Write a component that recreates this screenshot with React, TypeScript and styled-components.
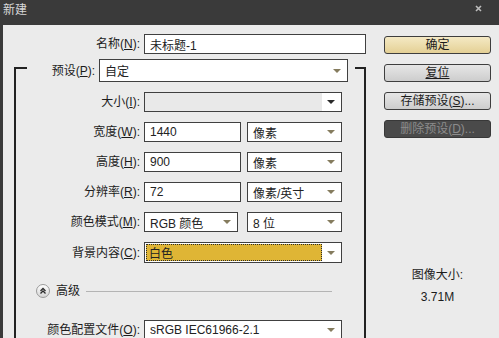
import React from "react";
import styled, { createGlobalStyle, css } from "styled-components";

const GlobalStyle = createGlobalStyle`
  html, body {
    margin: 0;
    padding: 0;
    background: #ebebeb;
  }
  body {
    font-family: "Liberation Sans", "Noto Sans CJK SC", sans-serif;
    font-size: 12px;
    color: #1c1c1c;
  }
`;

const Dialog = styled.div`
  width: 499px;
  height: 338px;
  overflow: hidden;
  display: flex;
  flex-direction: column;
  background: #ebebeb;
`;

const TitleBar = styled.div`
  flex: none;
  height: 25px;
  box-sizing: border-box;
  padding: 3px 17px 0 3px;
  background: #3a3a3a;
  color: #d8d8d8;
  display: flex;
  justify-content: space-between;
  align-items: flex-start;
  line-height: 14px;
`;

const CloseIcon = styled.svg`
  margin-top: 2px;
`;

const Body = styled.div`
  flex: 1;
  min-height: 0;
  display: flex;
  border-left: 3px solid #3a3a3a;
`;

const FormCol = styled.div`
  width: 367px;
  flex: none;
  box-sizing: border-box;
  padding-top: 9px;
  display: flex;
  flex-direction: column;
`;

const Row = styled.div<{ $h?: number; $mt?: number }>`
  display: flex;
  align-items: center;
  height: ${(p) => p.$h ?? 20}px;
  margin-top: ${(p) => p.$mt ?? 0}px;
  flex: none;
`;

const Label = styled.div<{ $w: number }>`
  flex: none;
  width: ${(p) => p.$w}px;
  margin-right: 4px;
  text-align: right;
  white-space: nowrap;
  line-height: 20px;
`;

// bracket-like group around the size settings
const Group = styled.div`
  position: relative;
  margin: 5px 0 0 11px;
  width: 352px;
  flex: 1;

  &::before,
  &::after {
    content: "";
    position: absolute;
    top: 8px;
    bottom: 0;
    border-top: 2px solid #222;
  }
  &::before {
    left: 0;
    width: 11px;
    border-left: 2px solid #222;
  }
  &::after {
    right: 0;
    width: 9px;
    border-right: 2px solid #222;
  }
`;

const Field = styled.div<{ $w: number; $h?: number }>`
  flex: none;
  width: ${(p) => p.$w}px;
  height: ${(p) => p.$h ?? 20}px;
  box-sizing: border-box;
  border: 1px solid #404040;
  background: #fff;
  display: flex;
  align-items: stretch;
  margin-right: ${(p) => (p.$w < 100 ? 6 : 0)}px;
`;

const Value = styled.div<{ $tone?: "disabled" | "focus" }>`
  flex: 1;
  padding-left: 5px;
  display: flex;
  align-items: center;
  white-space: nowrap;
  color: #222;
  ${(p) =>
    p.$tone === "disabled" &&
    css`
      background: #e9e9e9;
    `}
  ${(p) =>
    p.$tone === "focus" &&
    css`
      margin: 1px 0 1px 1px;
      padding-left: 3px;
      background: #dfb535;
      outline: 1px dotted #2a2a2a;
      outline-offset: -1px;
    `}
`;

const ArrowBox = styled.div<{ $dark?: boolean }>`
  flex: none;
  width: 19px;
  display: flex;
  align-items: center;
  justify-content: center;

  &::after {
    content: "";
    width: 0;
    height: 0;
    border-left: 4px solid transparent;
    border-right: 4px solid transparent;
    border-top: 4px solid ${(p) => (p.$dark ? "#2a2a2a" : "#857c5e")};
    margin-right: 2px;
  }
`;

const AdvancedRow = styled(Row)`
  padding-left: 22px;
`;

const AdvancedText = styled.span`
  margin-left: 6px;
  line-height: 20px;
`;

const Rule = styled.div`
  flex: 1;
  height: 1px;
  background: #b4b4b4;
  margin: 1px 34px 0 6px;
`;

const SideCol = styled.div`
  width: 107px;
  margin-left: 14px;
  padding-top: 11px;
  display: flex;
  flex-direction: column;
`;

const Button = styled.div<{ $kind?: "primary" | "disabled" }>`
  height: 18px;
  box-sizing: border-box;
  margin-bottom: 10px;
  border: 1px solid #3e3e3e;
  border-radius: 3px;
  text-align: center;
  line-height: 16px;
  color: #1c1c1c;
  background: linear-gradient(#e6e6e6, #cdcdcd);
  ${(p) =>
    p.$kind === "primary" &&
    css`
      background: linear-gradient(#f4e9c4, #e4d095);
    `}
  ${(p) =>
    p.$kind === "disabled" &&
    css`
      background: #4a4a4a;
      border-color: #383838;
      color: #8c8c8c;
    `}
`;

const SizeInfo = styled.div`
  margin-top: 120px;
  text-align: center;
  line-height: 14px;
  color: #1c1c1c;
`;

const SizeValue = styled.div`
  margin-top: 8px;
`;

function Select({
  w,
  h,
  value,
  tone,
  dark,
}: {
  w: number;
  h?: number;
  value: React.ReactNode;
  tone?: "disabled" | "focus";
  dark?: boolean;
}) {
  return (
    <Field $w={w} $h={h}>
      <Value $tone={tone}>{value}</Value>
      <ArrowBox $dark={dark} />
    </Field>
  );
}

function AdvancedIcon() {
  return (
    <svg width="14" height="14" viewBox="0 0 14 14">
      <defs>
        <linearGradient id="advFill" x1="0" y1="0" x2="0" y2="1">
          <stop offset="0" stopColor="#ffffff" />
          <stop offset="1" stopColor="#d4d4d4" />
        </linearGradient>
      </defs>
      <circle cx="7" cy="7" r="6.5" fill="url(#advFill)" stroke="#9a9a9a" />
      <polyline points="4.5,7 7,4.5 9.5,7" fill="none" stroke="#2a2a2a" strokeWidth="1.3" />
      <polyline points="4.5,9.5 7,7 9.5,9.5" fill="none" stroke="#2a2a2a" strokeWidth="1.3" />
    </svg>
  );
}

export default function App() {
  return (
    <>
      <GlobalStyle />
      <Dialog>
        <TitleBar>
          <span>新建</span>
          <CloseIcon width="7" height="7" viewBox="0 0 7 7">
            <path d="M1 1L6 6M6 1L1 6" stroke="#bdbdbd" strokeWidth="1.6" />
          </CloseIcon>
        </TitleBar>
        <Body>
          <FormCol>
            <Row>
              <Label $w={137}>
                名称(<u>N</u>):
              </Label>
              <Field $w={222}>
                <Value>未标题-1</Value>
              </Field>
            </Row>
            <Group>
              <Row $h={23}>
                <Label $w={81}>
                  预设(<u>P</u>):
                </Label>
                <Select w={249} h={23} value="自定" />
              </Row>
              <Row $mt={10}>
                <Label $w={126}>
                  大小(<u>I</u>):
                </Label>
                <Select w={198} value="" tone="disabled" dark />
              </Row>
              <Row $mt={10}>
                <Label $w={126}>
                  宽度(<u>W</u>):
                </Label>
                <Field $w={97}>
                  <Value>1440</Value>
                </Field>
                <Select w={95} value="像素" />
              </Row>
              <Row $mt={10}>
                <Label $w={126}>
                  高度(<u>H</u>):
                </Label>
                <Field $w={97}>
                  <Value>900</Value>
                </Field>
                <Select w={95} value="像素" />
              </Row>
              <Row $mt={10}>
                <Label $w={126}>
                  分辨率(<u>R</u>):
                </Label>
                <Field $w={97}>
                  <Value>72</Value>
                </Field>
                <Select w={95} value="像素/英寸" />
              </Row>
              <Row $mt={10}>
                <Label $w={126}>
                  颜色模式(<u>M</u>):
                </Label>
                <Field $w={94} style={{ marginRight: 9 }}>
                  <Value>RGB 颜色</Value>
                  <ArrowBox />
                </Field>
                <Select w={95} value="8 位" />
              </Row>
              <Row $mt={10} $h={21}>
                <Label $w={126}>
                  背景内容(<u>C</u>):
                </Label>
                <Select w={198} h={21} value="白色" tone="focus" />
              </Row>
              <AdvancedRow $mt={18}>
                <AdvancedIcon />
                <AdvancedText>高级</AdvancedText>
                <Rule />
              </AdvancedRow>
              <Row $mt={19}>
                <Label $w={126}>
                  颜色配置文件(<u>O</u>):
                </Label>
                <Select w={198} value="sRGB IEC61966-2.1" />
              </Row>
            </Group>
          </FormCol>
          <SideCol>
            <Button $kind="primary">确定</Button>
            <Button>
              <u>复位</u>
            </Button>
            <Button>
              存储预设(<u>S</u>)...
            </Button>
            <Button $kind="disabled">
              删除预设(<u>D</u>)...
            </Button>
            <SizeInfo>
              <div>图像大小:</div>
              <SizeValue>3.71M</SizeValue>
            </SizeInfo>
          </SideCol>
        </Body>
      </Dialog>
    </>
  );
}
